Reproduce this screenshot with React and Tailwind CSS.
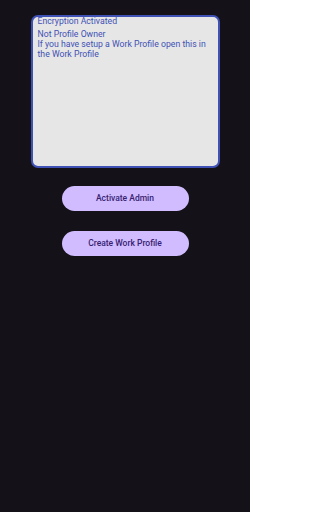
export default function App() {
  return (
    <div className="min-h-[512px] w-[250px] bg-[#141218] pt-[15px]" style={{ fontFamily: 'Roboto, "Noto Sans", sans-serif' }}>
      {/* status text area */}
      <div className="mx-auto h-[153px] w-[189px] overflow-hidden rounded-[7px] border-2 border-[#3f51b5] bg-[#e6e6e6] px-[5px] text-[8.7px] leading-[10px] text-[#3f51b5]">
        <p className="-mt-[1px]">Encryption Activated</p>
        <p className="mt-[3px]">Not Profile Owner</p>
        <p>If you have setup a Work Profile open this in the Work Profile</p>
      </div>

      <div className="mt-[18px] flex flex-col items-center gap-[20px]">
        <button className="h-[25px] w-[127px] rounded-full bg-[#d0bcff] text-[8.5px] font-medium text-[#381e72]">
          Activate Admin
        </button>
        <button className="h-[25px] w-[127px] rounded-full bg-[#d0bcff] text-[8.5px] font-medium text-[#381e72]">
          Create Work Profile
        </button>
      </div>
    </div>
  )
}
